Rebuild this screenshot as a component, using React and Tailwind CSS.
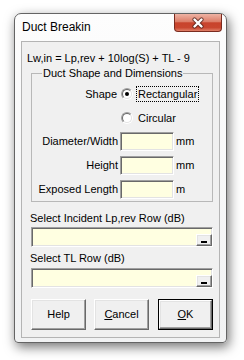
import React from "react";

const sunken =
  "border border-t-[#a0a0a0] border-l-[#a0a0a0] border-r-white border-b-white shadow-[inset_1px_1px_0_#696969,inset_-1px_-1px_0_#e3e3e3] bg-[#ffffe1]";

const raised =
  "border border-t-white border-l-white border-r-[#696969] border-b-[#696969] shadow-[inset_-1px_-1px_0_#a0a0a0,inset_1px_1px_0_#e3e3e3] bg-[#f0f0f0]";

function Radio({ checked }) {
  return (
    <div className="w-[12px] h-[12px] rounded-full border border-t-[#a0a0a0] border-l-[#a0a0a0] border-r-white border-b-white">
      <div className="w-full h-full rounded-full border border-t-[#696969] border-l-[#696969] border-r-[#e3e3e3] border-b-[#e3e3e3] bg-white flex items-center justify-center">
        {checked && <div className="w-[4px] h-[4px] rounded-full bg-black" />}
      </div>
    </div>
  );
}

function Field({ label, unit }) {
  return (
    <div className="flex items-center h-[19px]">
      <div className="w-[86px] text-right whitespace-nowrap">{label}</div>
      <div className={`ml-[2px] w-[54px] h-[19px] ${sunken}`} />
      <div className="ml-[2px]">{unit}</div>
    </div>
  );
}

function RefEdit() {
  return (
    <div className={`ml-[9px] w-[182px] h-[20px] flex items-end justify-end ${sunken}`}>
      <div className={`w-[16px] h-[12px] flex items-end justify-center pb-[2px] ${raised}`}>
        <div className="w-[6px] h-[2px] bg-black" />
      </div>
    </div>
  );
}

export default function App() {
  return (
    <div
      className="w-[244px] h-[360px] bg-white pt-[13px] pl-[14px] text-[11px] leading-[13px] text-black"
      style={{ fontFamily: '"Liberation Sans", Arial, sans-serif' }}
    >
      <div className="w-[213px] h-[330px] flex flex-col border border-[#646464] rounded-t-[7px] rounded-b-[4px] bg-linear-to-b from-[#fdfdfd] to-[#f1f2f3] shadow-[2px_4px_12px_rgba(0,0,0,0.55)]">
        {/* Title bar */}
        <div className="h-[27px] flex items-start pl-[7px] pr-[4px]">
          <div className="flex-1 pt-[6px] text-[12px] leading-[15px]">Duct Breakin</div>
          <div className="w-[48px] h-[18px] rounded-b-[4px] border border-t-0 border-[#7a2b1f] bg-[linear-gradient(to_bottom,#eeb3a4_0%,#dc7e69_45%,#c8432c_52%,#c9462f_80%,#e08068_100%)] flex items-center justify-center">
            <svg width="14" height="12" viewBox="0 0 14 12">
              <path d="M3.5 2.5 L10.5 9.5 M10.5 2.5 L3.5 9.5" stroke="#4a2019" strokeWidth="4.2" strokeLinecap="round" opacity="0.75" />
              <path d="M3.5 2.5 L10.5 9.5 M10.5 2.5 L3.5 9.5" stroke="#ffffff" strokeWidth="2.4" strokeLinecap="round" />
            </svg>
          </div>
        </div>

        {/* Client area */}
        <div className="flex-1 px-[6px] pb-[4px] flex">
          <div className="flex-1 border border-[#b4b4b4] bg-[#f0f0f0] flex flex-col">
            <div className="mt-[10px] pl-[5px] whitespace-nowrap">Lw,in = Lp,rev + 10log(S) + TL - 9</div>

            {/* Group box */}
            <div className="relative mt-[8px] ml-[9px] w-[182px] h-[129px] border border-[#b8b8b8] flex flex-col">
              <div className="absolute left-[10px] -top-[7px] px-[1px] bg-[#f0f0f0] whitespace-nowrap">
                Duct Shape and Dimensions
              </div>
              <div className="mt-[12px] h-[16px] flex items-center">
                <div className="w-[85px] text-right">Shape</div>
                <div className="ml-[4px]"><Radio checked /></div>
                <div className="ml-[3px] h-[16px] px-[1px] border border-dotted border-black flex items-center">Rectangular</div>
              </div>
              <div className="mt-[8px] h-[16px] flex items-center">
                <div className="w-[85px]" />
                <div className="ml-[4px]"><Radio /></div>
                <div className="ml-[3px] h-[16px] px-[1px] border border-transparent flex items-center">Circular</div>
              </div>
              <div className="mt-[6px] flex flex-col gap-[5px]">
                <Field label="Diameter/Width" unit="mm" />
                <Field label="Height" unit="mm" />
                <Field label="Exposed Length" unit="m" />
              </div>
            </div>

            <div className="mt-[10px] pl-[8px]">Select Incident Lp,rev Row (dB)</div>
            <div className="mt-[2px]"><RefEdit /></div>
            <div className="mt-[5px] pl-[8px]">Select TL Row (dB)</div>
            <div className="mt-[3px]"><RefEdit /></div>

            {/* Buttons */}
            <div className="mt-[11px] ml-[9px] flex">
              <div className={`w-[55px] h-[31px] flex items-center justify-center ${raised}`}>Help</div>
              <div className={`ml-[8px] w-[55px] h-[31px] flex items-center justify-center ${raised}`}>
                <span><span className="underline">C</span>ancel</span>
              </div>
              <div className="ml-[9px] w-[55px] h-[31px] border border-black">
                <div className={`w-full h-full flex items-center justify-center ${raised}`}>
                  <span><span className="underline">O</span>K</span>
                </div>
              </div>
            </div>
          </div>
        </div>
      </div>
    </div>
  );
}
